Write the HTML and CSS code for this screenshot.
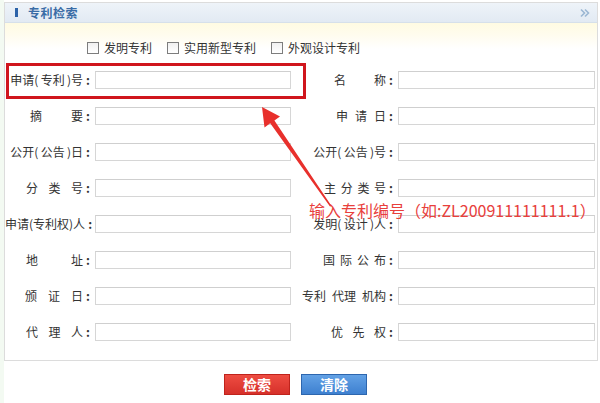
FILE: index.html
```html
<!DOCTYPE html>
<html lang="zh-CN">
<head>
<meta charset="utf-8">
<title>专利检索</title>
<link rel="stylesheet" href="styles.css">
</head>
<body>
<div class="page">
  <div class="panel">
    <div class="head">
      <span class="bar"></span>
      <span class="title">专利检索</span>
      <svg class="more" width="10" height="10" viewBox="0 0 10 10"><path d="M1 1.5 L4.5 5 L1 8.5 M5 1.5 L8.5 5 L5 8.5" fill="none" stroke="#9bb7d3" stroke-width="1.6"/></svg>
    </div>
    <div class="body">
      <div class="checks">
        <span class="box"></span><span class="ctext">发明专利</span>
        <span class="box"></span><span class="ctext">实用新型专利</span>
        <span class="box"></span><span class="ctext">外观设计专利</span>
      </div>
      <div class="grid">
        <label class="lbl">申请(&thinsp;专利&thinsp;)号<b class="c">:</b></label><input class="field" type="text">
        <label class="lbl"><span class="j w52">名称</span><b class="c">:</b></label><input class="field" type="text">

        <label class="lbl"><span class="j w53">摘要</span><b class="c">:</b></label><input class="field" type="text">
        <label class="lbl"><span class="j w50">申请日</span><b class="c">:</b></label><input class="field" type="text">

        <label class="lbl">公开(&thinsp;公告&thinsp;)日<b class="c">:</b></label><input class="field" type="text">
        <label class="lbl">公开(&thinsp;公告&thinsp;)号<b class="c">:</b></label><input class="field" type="text">

        <label class="lbl"><span class="j w57">分类号</span><b class="c">:</b></label><input class="field" type="text">
        <label class="lbl"><span class="j w62">主分类号</span><b class="c">:</b></label><input class="field" type="text">

        <label class="lbl">申请(专利权)人<b class="c">:</b></label><input class="field" type="text">
        <label class="lbl">发明(&thinsp;设计&thinsp;)人<b class="c">:</b></label><input class="field" type="text">

        <label class="lbl"><span class="j w57">地址</span><b class="c">:</b></label><input class="field" type="text">
        <label class="lbl"><span class="j w63">国际公布</span><b class="c">:</b></label><input class="field" type="text">

        <label class="lbl"><span class="j w58">颁证日</span><b class="c">:</b></label><input class="field" type="text">
        <label class="lbl">专利&ensp;代理&ensp;机构<b class="c">:</b></label><input class="field" type="text">

        <label class="lbl"><span class="j w57">代理人</span><b class="c">:</b></label><input class="field" type="text">
        <label class="lbl"><span class="j w55">优先权</span><b class="c">:</b></label><input class="field" type="text">
      </div>
    </div>
  </div>
  <div class="btns">
    <button class="btn red" type="button">检索</button>
    <button class="btn blue" type="button">清除</button>
  </div>
</div>

<div class="callout-box"></div>
<svg class="arrow" width="600" height="403" viewBox="0 0 600 403">
  <polygon points="262,107 280,116.5 274.4,120.4 331.5,206 330,206.5 270.2,123.2 264.5,127.5" fill="#e8302c"/>
</svg>
<div class="callout-text">输入专利编号（如:ZL200911111111.1）</div>
</body>
</html>
```
FILE: styles.css
```css
html, body {
  margin: 0;
  padding: 0;
}
body {
  position: relative;
  width: 600px;
  height: 403px;
  overflow: hidden;
  background: #f3faf2;
  font-family: "Noto Sans CJK SC", "Noto Sans", sans-serif;
  font-size: 12px;
  color: #333;
}
.page {
  margin-left: 4px;
  padding-top: 2px;
  height: 401px;
  background: #fff;
}
.panel {
  width: 594px;
  box-sizing: border-box;
  border: 1px solid #dcdcdc;
}
.head {
  height: 19px;
  border-bottom: 1px solid #d6e0ea;
  background: linear-gradient(#eef3f9, #e2eaf3);
  display: flex;
  align-items: center;
  padding-left: 10px;
}
.bar {
  width: 3px;
  height: 9px;
  background: #2c62a8;
  margin-right: 10px;
}
.title {
  font-weight: bold;
  font-size: 12px;
  letter-spacing: 0.5px;
  color: #3a6ca6;
}
.more {
  margin-left: auto;
  margin-right: 7px;
}
.body {
  padding: 17px 0 10px 0;
  background: linear-gradient(#fffbe2 0, #fffcee 12px, #fff 26px);
}
.checks {
  display: flex;
  align-items: center;
  height: 16px;
  padding-left: 82px;
  margin-bottom: 6px;
}
.box {
  width: 10px;
  height: 10px;
  border: 1px solid #7d7d7d;
  background: linear-gradient(#f0f0f0, #fff);
  margin-right: 5px;
}
.ctext {
  margin-right: 15px;
  line-height: 16px;
}
.grid {
  display: grid;
  grid-template-columns: 90px 196px 107px 197px;
  grid-auto-rows: 36px;
  align-items: center;
}
.lbl {
  text-align: right;
  padding-right: 5px;
  white-space: nowrap;
  line-height: 16px;
}
.c {
  margin-left: 3px;
  font-weight: bold;
}
.j {
  display: inline-block;
  text-align: justify;
  text-align-last: justify;
  vertical-align: top;
}
.w50 { width: 50px; }
.w52 { width: 52px; }
.w53 { width: 53px; }
.w55 { width: 55px; }
.w57 { width: 57px; }
.w58 { width: 58px; }
.w62 { width: 62px; }
.w63 { width: 63px; }
.field {
  box-sizing: border-box;
  width: 100%;
  height: 18px;
  margin: 0;
  padding: 0 3px;
  border: 1px solid #d6d6d6;
  border-top-color: #cfcfcf;
  background: #fff;
  outline: none;
}
.btns {
  display: flex;
  justify-content: center;
  gap: 11px;
  margin-top: 13px;
  padding-right: 13px;
}
.btn {
  width: 66px;
  height: 21px;
  padding: 0;
  border: 1px solid;
  color: #fff;
  font-family: "Noto Sans CJK SC", sans-serif;
  font-weight: bold;
  font-size: 14px;
  line-height: 19px;
}
.red {
  background: linear-gradient(#ee4d42, #d6302a);
  border-color: #bf231c;
}
.blue {
  background: linear-gradient(#62a1e5, #3e80d0);
  border-color: #2d66ae;
}
.callout-box {
  position: absolute;
  left: 6px;
  top: 63px;
  width: 300px;
  height: 36px;
  box-sizing: border-box;
  border: 3px solid #d0151d;
}
.arrow {
  position: absolute;
  left: 0;
  top: 0;
  pointer-events: none;
}
.callout-text {
  position: absolute;
  left: 309px;
  top: 201px;
  font-size: 16px;
  line-height: 18px;
  color: #e8403c;
  white-space: nowrap;
}
```
